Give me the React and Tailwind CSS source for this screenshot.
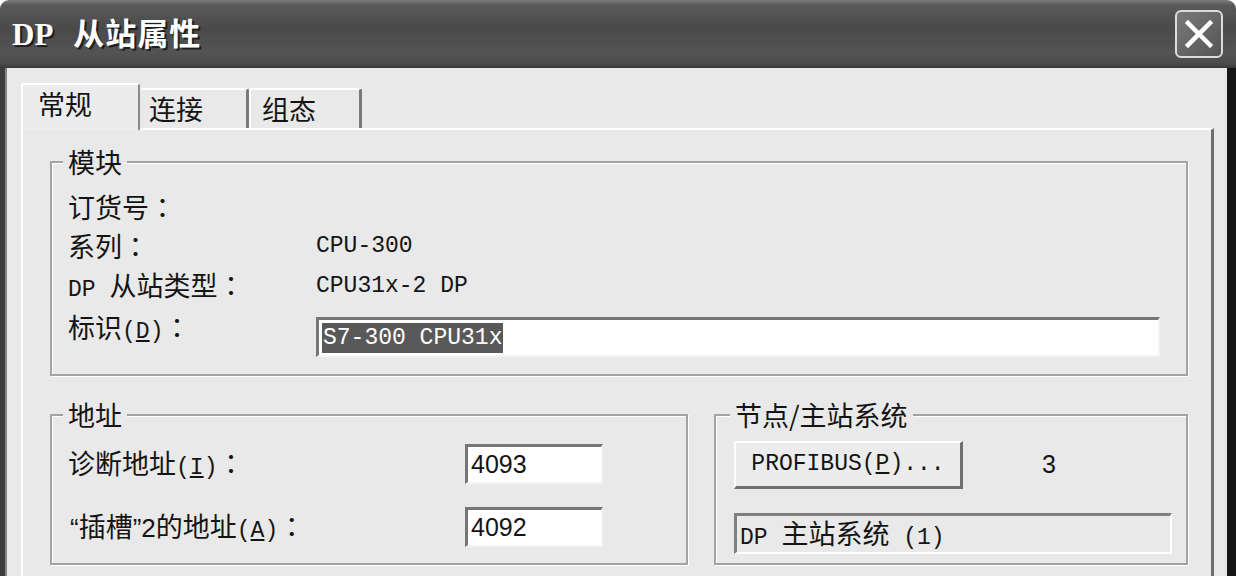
import React from 'react';

const cjk = "font-['Noto_Sans_CJK_SC',sans-serif]";
const mono = "font-['Liberation_Mono','Noto_Sans_CJK_SC',monospace] text-[23px]";
const sans = "font-['Liberation_Sans','Noto_Sans_CJK_SC',sans-serif]";

function M({ children }) {
  return <span className={mono}>{children}</span>;
}

// full-width colon with the glyph centred, as in the old dialog font
function Colon() {
  return <span className="font-['Noto_Sans_CJK_TC',sans-serif]">：</span>;
}

function Group({ label, className, legendClass, children }) {
  return (
    <fieldset
      className={`border-2 border-[#a3a3a3] shadow-[inset_1px_1px_0_#ffffff,1px_1px_0_#ffffff] ${className}`}
    >
      <legend className={`px-[5px] leading-[30px] bg-[#e9e9e9] text-[27px] ${legendClass}`}>{label}</legend>
      {children}
    </fieldset>
  );
}

function Field({ className, children }) {
  return (
    <div
      className={`h-[40px] flex items-center bg-white border-t-[3px] border-l-[3px] border-[#767676] border-b-2 border-r-2 border-b-[#f4f4f4] border-r-[#f4f4f4] ${className}`}
    >
      {children}
    </div>
  );
}

function App() {
  return (
    <div className={`w-[1236px] h-[576px] overflow-hidden flex flex-col bg-white text-[#141414] ${cjk}`}>
      {/* title bar */}
      <div className="h-[68px] shrink-0 rounded-t-[9px] flex items-center justify-between pl-[12px] pr-[13px] bg-[linear-gradient(to_bottom,#7c7c7c_0px,#5a5a5a_5px,#4a4a4a_28px,#535353_52px,#4b4b4b_64px,#383838_68px)]">
        <div className="flex items-baseline text-white font-bold [text-shadow:2px_2px_0_#1e1e1e] -mt-[1px]">
          <span className="font-['Liberation_Serif',serif] text-[31px]">DP</span>
          <span className="ml-[20px] text-[31px] tracking-[1px]">从站属性</span>
        </div>
        <div className="w-[48px] h-[48px] rounded-[6px] border-2 border-[#dcdcdc] bg-[linear-gradient(135deg,#7a7a7a,#555555)] flex items-center justify-center">
          <svg width="32" height="32" viewBox="0 0 32 32">
            <path d="M5 5 L27 27 M27 5 L5 27" stroke="#ffffff" strokeWidth="4.5" strokeLinecap="square" />
          </svg>
        </div>
      </div>

      {/* window body */}
      <div className="flex flex-1 min-h-0">
        <div className="w-[7px] shrink-0 bg-[#3c3c3c] border-r-2 border-[#858585]" />
        <div className="flex-1 flex flex-col bg-[#e9e9e9] pl-[14px] pr-[13px] pt-[15px]">
          {/* tabs */}
          <div className="flex items-end h-[45px] shrink-0 text-[27px]">
            <div className="relative z-10 w-[119px] h-[47px] -mb-[2px] bg-[#ececec] border-t-2 border-l-2 border-white border-r-2 border-r-[#8a8a8a] rounded-t-[3px] pl-[15px] leading-[38px]">
              常规
            </div>
            <div className="w-[109px] h-[40px] border-t-2 border-white border-r-[3px] border-r-[#7a7a7a] rounded-t-[3px] pl-[9px] leading-[38px]">
              连接
            </div>
            <div className="w-[113px] h-[40px] border-t-2 border-l-2 border-white border-r-[3px] border-r-[#7a7a7a] rounded-t-[3px] pl-[11px] leading-[38px]">
              组态
            </div>
          </div>

          {/* tab panel */}
          <div className="flex-1 bg-[#e9e9e9] border-t-2 border-l-2 border-white border-r-[3px] border-r-[#6e6e6e] pl-[27px] pt-[17px]">
            <Group label="模块" legendClass="-ml-[5px]" className="w-[1138px] pl-[16px] pt-[11px] pb-[8px] text-[27px]">
              <div className="flex items-center h-[39px]">
                <span className="w-[248px]">订货号<Colon /></span>
              </div>
              <div className="flex items-center h-[39px]">
                <span className="w-[248px]">系列<Colon /></span>
                <M>CPU-300</M>
              </div>
              <div className="flex items-center h-[41px]">
                <span className="w-[248px]"><M>DP </M>从站类型<Colon /></span>
                <M>CPU31x-2 DP</M>
              </div>
              <div className="flex items-start h-[59px]">
                <span className="w-[248px] leading-[40px]">标识<M>(<span className="underline">D</span>)</M><Colon /></span>
                <Field className="mt-[10px] w-[844px] pl-[3px]">
                  <span className={`${mono} bg-[#595959] text-white px-[1px] leading-[30px]`}>S7-300 CPU31x</span>
                </Field>
              </div>
            </Group>

            <div className="flex gap-[26px] mt-[24px]">
              <Group label="地址" legendClass="-ml-[5px]" className="w-[638px] pl-[16px] pt-[14px] pb-[16px] text-[27px]">
                <div className="flex items-center h-[40px]">
                  <span className="w-[397px]">诊断地址<M>(<span className="underline">I</span>)</M><Colon /></span>
                  <Field className="w-[138px] pl-[3px]">
                    <span className={`${sans} text-[25px]`}>4093</span>
                  </Field>
                </div>
                <div className="flex items-center h-[40px] mt-[23px]">
                  <span className="w-[397px] pl-[2px]">
                    <span className={`${sans} text-[26px]`}>“</span>插槽<span className={`${sans} text-[26px]`}>”2</span>的地址<M>(<span className="underline">A</span>)</M><Colon />
                  </span>
                  <Field className="w-[138px] pl-[3px]">
                    <span className={`${sans} text-[25px]`}>4092</span>
                  </Field>
                </div>
              </Group>

              <Group label="节点/主站系统" legendClass="-ml-[4px]" className="w-[474px] pl-[18px] pt-[11px] pb-[9px] text-[27px]">
                <div className="flex items-center h-[48px]">
                  <div className="w-[229px] h-[48px] flex items-center justify-center bg-[#ececec] border-t-2 border-l-2 border-white border-b-[3px] border-r-[3px] border-b-[#6f6f6f] border-r-[#6f6f6f]">
                    <M>PROFIBUS(<span className="underline">P</span>)...</M>
                  </div>
                  <span className={`${sans} text-[25px] ml-[79px]`}>3</span>
                </div>
                <div className="mt-[24px] w-[438px] h-[41px] flex items-center pl-[3px] bg-[#e9e9e9] border-t-[3px] border-l-[3px] border-[#808080] border-b-2 border-r-2 border-b-white border-r-white">
                  <span className="whitespace-pre"><M>DP </M>主站系统<M> (1)</M></span>
                </div>
              </Group>
            </div>
          </div>
        </div>
        <div className="w-[9px] shrink-0 bg-[#161616]" />
      </div>
    </div>
  );
}

export default App;
